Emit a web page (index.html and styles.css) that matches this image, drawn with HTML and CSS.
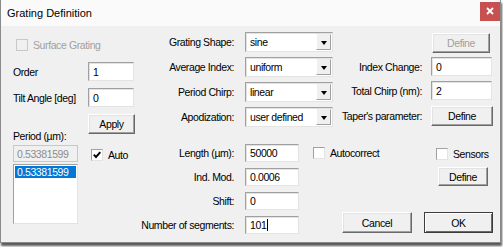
FILE: index.html
```html
<!DOCTYPE html>
<html lang="en">
<head>
    <meta charset="UTF-8">
    <title>Grating Definition</title>
    <link rel="stylesheet" href="styles.css">
</head>
<body>
<div class="window">
    <div class="titlebar">
        <span class="title">Grating Definition</span>
        <span class="close"><svg width="8" height="8" viewBox="0 0 8 8"><path d="M1 1L7 7M7 1L1 7" stroke="#fff" stroke-width="1.8"/></svg></span>
    </div>
    <div class="client">
        <!-- left column -->
        <div class="col col-left">
            <div class="check disabled surface"><span class="box"></span>Surface Grating</div>
            <div class="row order"><span class="lbl">Order</span><div class="edit w46">1</div></div>
            <div class="row tilt"><span class="lbl">Tilt Angle [deg]</span><div class="edit w46">0</div></div>
            <div class="row apply-row"><span class="lbl period">Period (µm):</span><div class="btn apply">Apply</div></div>
            <div class="row period-row">
                <div class="edit grayed">0.53381599</div>
                <div class="check auto"><span class="box"><svg width="10" height="10" viewBox="0 0 10 10"><path d="M1.8 4.6L4 7L8.3 2.2" fill="none" stroke="#000" stroke-width="1.9"/></svg></span>Auto</div>
            </div>
            <div class="listbox"><div class="item selected">0.53381599</div></div>
        </div>

        <!-- middle column -->
        <div class="col col-mid">
            <div class="row combo-row first"><span class="lbl">Grating Shape:</span><div class="combo"><span>sine</span><span class="drop"></span></div></div>
            <div class="row combo-row"><span class="lbl">Average Index:</span><div class="combo"><span>uniform</span><span class="drop"></span></div></div>
            <div class="row combo-row"><span class="lbl">Period Chirp:</span><div class="combo"><span>linear</span><span class="drop"></span></div></div>
            <div class="row combo-row"><span class="lbl">Apodization:</span><div class="combo"><span>user defined</span><span class="drop"></span></div></div>
            <div class="row param-row length">
                <span class="lbl">Length (µm):</span><div class="edit w54">50000</div>
                <div class="check autocorrect"><span class="box"></span>Autocorrect</div>
            </div>
            <div class="row param-row"><span class="lbl">Ind. Mod.</span><div class="edit w54">0.0006</div></div>
            <div class="row param-row"><span class="lbl">Shift:</span><div class="edit w54">0</div></div>
            <div class="row param-row"><span class="lbl">Number of segments:</span><div class="edit w54">101<span class="caret"></span></div></div>
        </div>

        <!-- right column -->
        <div class="col col-right">
            <div class="btn disabled define-top">Define</div>
            <div class="row right-row index"><span class="lbl">Index Change:</span><div class="edit w61">0</div></div>
            <div class="row right-row"><span class="lbl">Total Chirp (nm):</span><div class="edit w61">2</div></div>
            <div class="row right-row taper"><span class="lbl">Taper's parameter:</span><div class="btn define-taper">Define</div></div>
            <div class="check sensors"><span class="box"></span>Sensors</div>
            <div class="btn define-sensors">Define</div>
            <div class="row buttons">
                <div class="btn cancel">Cancel</div>
                <div class="btn ok">OK</div>
            </div>
        </div>
    </div>
</div>
</body>
</html>
```

FILE: styles.css
```css
body {
    margin: 0;
    width: 503px;
    height: 247px;
    overflow: hidden;
    background-color: #fff;
    font-family: "Liberation Sans", Arial, sans-serif;
    font-size: 10.5px;
    letter-spacing: -0.4px;
    color: #000;
}
.window {
    width: 501px;
    height: 243px;
    border: 1px solid #8a8a8a;
    border-top: none;
    background-color: #f0f0f0;
    box-shadow: 1px 3px 2px #5a5a5a;
    box-sizing: border-box;
}
.titlebar {
    height: 26px;
    display: flex;
    align-items: center;
    justify-content: space-between;
    background-color: #fafafa;
}
.title {
    font-size: 11px;
    letter-spacing: 0;
    margin-left: 6px;
    margin-top: -1px;
}
.close {
    width: 20px;
    height: 19px;
    margin-top: -4px;
    background-color: #c75050;
    display: flex;
    align-items: center;
    justify-content: center;
}
.client {
    display: flex;
    padding-left: 12px;
}
.col {
    display: flex;
    flex-direction: column;
    align-items: flex-start;
}
.row {
    display: flex;
    align-items: center;
}
.lbl {
    white-space: nowrap;
}

/* edit boxes */
.edit {
    height: 19px;
    box-sizing: border-box;
    background-color: #fff;
    border: 1px solid;
    border-color: #a0a0a0 #e3e3e3 #e3e3e3 #a0a0a0;
    box-shadow: inset 1px 1px 0 #e3e3e3;
    padding-left: 4px;
    white-space: nowrap;
    display: flex;
    align-items: center;
}
.edit.grayed {
    width: 65px;
    height: 17px;
    background-color: #f0f0f0;
    color: #8d8d8d;
    border-color: #c8c8c8;
    box-shadow: none;
    padding-left: 3px;
}
.w46 { width: 46px; }
.w54 { width: 54px; height: 18px; }
.w61 { width: 61px; }
.caret {
    display: inline-block;
    width: 1px;
    height: 12px;
    margin-left: 1px;
    background-color: #000;
}

/* buttons */
.btn {
    box-sizing: border-box;
    height: 20px;
    background-color: #f0f0f0;
    border: 1px solid;
    border-color: #fff #696969 #696969 #fff;
    box-shadow: inset -1px -1px 0 #a0a0a0, inset 1px 1px 0 #e3e3e3;
    display: flex;
    align-items: center;
    justify-content: center;
}
.btn.disabled {
    color: #a0a0a0;
}

/* check boxes */
.check {
    display: flex;
    align-items: center;
    white-space: nowrap;
}
.box {
    width: 12px;
    height: 12px;
    box-sizing: border-box;
    background-color: #fff;
    border: 1px solid;
    border-color: #a0a0a0 #e3e3e3 #e3e3e3 #a0a0a0;
    margin-right: 5px;
    display: flex;
    align-items: center;
    justify-content: center;
}
.check.disabled {
    color: #a0a0a0;
}
.check.disabled .box {
    background-color: #f0f0f0;
    border-color: #c8c8c8;
}

/* left column */
.col-left {
    width: 124px;
}
.col-left .lbl {
    width: 75px;
}
.surface {
    margin-top: 13px;
    margin-left: 3px;
}
.order {
    margin-top: 11px;
}
.tilt {
    margin-top: 7px;
}
.apply-row {
    margin-top: 7px;
    align-items: flex-start;
}
.lbl.period {
    margin-top: 16px;
    line-height: 12px;
}
.apply {
    width: 47px;
}
.period-row {
    margin-top: 3px;
}
.auto {
    margin-left: 13px;
    margin-top: 2px;
}
.listbox {
    width: 65px;
    height: 60px;
    margin-top: 2px;
    box-sizing: border-box;
    background-color: #fff;
    border: 1px solid;
    border-color: #a0a0a0 #e3e3e3 #e3e3e3 #a0a0a0;
    padding: 1px;
}
.item {
    height: 12px;
    line-height: 12px;
    padding-left: 2px;
}
.item.selected {
    background-color: #0078d7;
    color: #fff;
}

/* middle column */
.col-mid {
    width: 204px;
}
.col-mid .lbl {
    width: 97px;
    text-align: right;
    margin-right: 11px;
}
.combo-row {
    margin-top: 5px;
}
.combo-row.first {
    margin-top: 6px;
}
.combo {
    width: 88px;
    height: 20px;
    box-sizing: border-box;
    background-color: #fff;
    border: 1px solid;
    border-color: #a0a0a0 #e3e3e3 #e3e3e3 #a0a0a0;
    box-shadow: inset 1px 1px 0 #e3e3e3;
    padding: 1px 1px 1px 4px;
    white-space: nowrap;
    display: flex;
    align-items: center;
    justify-content: space-between;
}
.drop {
    width: 15px;
    height: 16px;
    box-sizing: border-box;
    background-color: #f0f0f0;
    border: 1px solid;
    border-color: #f0f0f0 #a0a0a0 #a0a0a0 #fff;
    display: flex;
    align-items: center;
    justify-content: center;
}
.drop::after {
    content: "";
    border-left: 3.5px solid transparent;
    border-right: 3.5px solid transparent;
    border-top: 4px solid #000;
    margin-top: 1px;
}
.param-row {
    margin-top: 6px;
}
.param-row.length {
    margin-top: 17px;
}
.autocorrect {
    margin-left: 14px;
}

/* right column */
.col-right {
    width: 152px;
}
.col-right .lbl {
    width: 81px;
    text-align: right;
    margin-right: 9px;
}
.define-top {
    width: 58px;
    margin-top: 7px;
    margin-left: 91px;
}
.right-row {
    margin-top: 5px;
}
.right-row.index {
    margin-top: 4px;
}
.right-row.taper {
    margin-top: 6px;
}
.define-taper {
    width: 62px;
}
.sensors {
    margin-top: 22px;
    margin-left: 95px;
}
.define-sensors {
    width: 50px;
    height: 19px;
    margin-top: 7px;
    margin-left: 97px;
}
.buttons {
    margin-top: 26px;
    margin-left: 1px;
}
.cancel {
    width: 70px;
    height: 21px;
}
.ok {
    width: 69px;
    height: 21px;
    margin-left: 12px;
    border-color: #3c3c3c;
    box-shadow: inset 1px 1px 0 #fff, inset -1px -1px 0 #696969;
}
```
